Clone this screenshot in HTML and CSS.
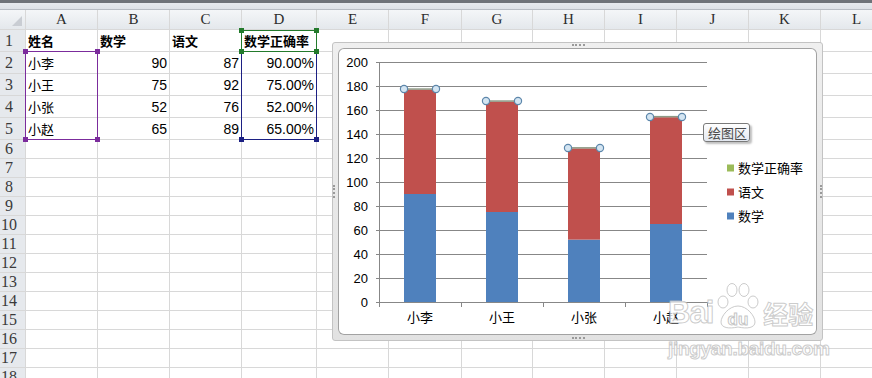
FILE: index.html
```html
<!DOCTYPE html>
<html lang="zh-CN">
<head>
  <meta charset="UTF-8" />
  <title>数学成绩 - 图表</title>
  <link rel="stylesheet" href="styles.css">
</head>
<body>
  <div class="titlebar"></div>

  <div class="sheet">
    <div class="ch corner"></div><div class="ch">A</div><div class="ch">B</div><div class="ch">C</div><div class="ch">D</div><div class="ch">E</div><div class="ch">F</div><div class="ch">G</div><div class="ch">H</div><div class="ch">I</div><div class="ch">J</div><div class="ch">K</div><div class="ch">L</div>

    <div class="rh">1</div><div class="hd">姓名</div><div class="hd">数学</div><div class="hd">语文</div><div class="hd">数学正确率</div><div></div><div></div><div></div><div></div><div></div><div></div><div></div><div></div>
    <div class="rh">2</div><div class="txt">小李</div><div class="num">90</div><div class="num">87</div><div class="num">90.00%</div><div></div><div></div><div></div><div></div><div></div><div></div><div></div><div></div>
    <div class="rh">3</div><div class="txt">小王</div><div class="num">75</div><div class="num">92</div><div class="num">75.00%</div><div></div><div></div><div></div><div></div><div></div><div></div><div></div><div></div>
    <div class="rh">4</div><div class="txt">小张</div><div class="num">52</div><div class="num">76</div><div class="num">52.00%</div><div></div><div></div><div></div><div></div><div></div><div></div><div></div><div></div>
    <div class="rh">5</div><div class="txt">小赵</div><div class="num">65</div><div class="num">89</div><div class="num">65.00%</div><div></div><div></div><div></div><div></div><div></div><div></div><div></div><div></div>

    <div class="rh">6</div><div></div><div></div><div></div><div></div><div></div><div></div><div></div><div></div><div></div><div></div><div></div><div></div>
    <div class="rh">7</div><div></div><div></div><div></div><div></div><div></div><div></div><div></div><div></div><div></div><div></div><div></div><div></div>
    <div class="rh">8</div><div></div><div></div><div></div><div></div><div></div><div></div><div></div><div></div><div></div><div></div><div></div><div></div>
    <div class="rh">9</div><div></div><div></div><div></div><div></div><div></div><div></div><div></div><div></div><div></div><div></div><div></div><div></div>
    <div class="rh">10</div><div></div><div></div><div></div><div></div><div></div><div></div><div></div><div></div><div></div><div></div><div></div><div></div>
    <div class="rh">11</div><div></div><div></div><div></div><div></div><div></div><div></div><div></div><div></div><div></div><div></div><div></div><div></div>
    <div class="rh">12</div><div></div><div></div><div></div><div></div><div></div><div></div><div></div><div></div><div></div><div></div><div></div><div></div>
    <div class="rh">13</div><div></div><div></div><div></div><div></div><div></div><div></div><div></div><div></div><div></div><div></div><div></div><div></div>
    <div class="rh">14</div><div></div><div></div><div></div><div></div><div></div><div></div><div></div><div></div><div></div><div></div><div></div><div></div>
    <div class="rh">15</div><div></div><div></div><div></div><div></div><div></div><div></div><div></div><div></div><div></div><div></div><div></div><div></div>
    <div class="rh">16</div><div></div><div></div><div></div><div></div><div></div><div></div><div></div><div></div><div></div><div></div><div></div><div></div>
    <div class="rh">17</div><div></div><div></div><div></div><div></div><div></div><div></div><div></div><div></div><div></div><div></div><div></div><div></div>
    <div class="rh">18</div><div></div><div></div><div></div><div></div><div></div><div></div><div></div><div></div><div></div><div></div><div></div><div></div>
  </div>

  <!-- range highlights of the chart source data -->
  <div class="sel sel-names"><i class="tl"></i><i class="tr"></i><i class="bl"></i><i class="br"></i></div>
  <div class="sel sel-math"><i class="tl"></i><i class="tr"></i><i class="bl"></i><i class="br"></i></div>
  <div class="sel sel-rate"><i class="tl"></i><i class="tr"></i><i class="bl"></i><i class="br"></i></div>

  <div class="chart">
    <span class="grip grip-top"></span>
    <span class="grip grip-bottom"></span>
    <span class="grip grip-left"></span>
    <span class="grip grip-right"></span>

    <div class="plot-area">
      <svg class="chart-svg" width="479" height="287" viewBox="0 0 479 287">
        <g class="gridlines">
          <line x1="38" y1="14.5" x2="369" y2="14.5"/>
          <line x1="38" y1="38.5" x2="369" y2="38.5"/>
          <line x1="38" y1="62.5" x2="369" y2="62.5"/>
          <line x1="38" y1="86.5" x2="369" y2="86.5"/>
          <line x1="38" y1="110.5" x2="369" y2="110.5"/>
          <line x1="38" y1="134.5" x2="369" y2="134.5"/>
          <line x1="38" y1="158.5" x2="369" y2="158.5"/>
          <line x1="38" y1="182.5" x2="369" y2="182.5"/>
          <line x1="38" y1="206.5" x2="369" y2="206.5"/>
          <line x1="38" y1="230.5" x2="369" y2="230.5"/>
        </g>

        <g class="y-labels">
          <text x="30" y="19">200</text>
          <text x="30" y="43">180</text>
          <text x="30" y="67">160</text>
          <text x="30" y="91">140</text>
          <text x="30" y="115">120</text>
          <text x="30" y="139">100</text>
          <text x="30" y="163">80</text>
          <text x="30" y="187">60</text>
          <text x="30" y="211">40</text>
          <text x="30" y="235">20</text>
          <text x="30" y="259">0</text>
        </g>

        <!-- 数学 -->
        <g fill="#4f81bd">
          <rect x="66" y="146" width="32" height="108"/>
          <rect x="148" y="164" width="32" height="90"/>
          <rect x="230" y="191.6" width="32" height="62.4"/>
          <rect x="312" y="176" width="32" height="78"/>
        </g>
        <!-- 语文 -->
        <g fill="#c0504d">
          <rect x="66" y="41.6" width="32" height="104.4"/>
          <rect x="148" y="53.6" width="32" height="110.4"/>
          <rect x="230" y="100.4" width="32" height="91.2"/>
          <rect x="312" y="69.2" width="32" height="106.8"/>
        </g>
        <!-- 数学正确率 (selected) -->
        <g fill="#8d9a86">
          <rect x="66" y="40.3" width="32" height="1.5"/>
          <rect x="148" y="52.3" width="32" height="1.5"/>
          <rect x="230" y="99.1" width="32" height="1.5"/>
          <rect x="312" y="67.9" width="32" height="1.5"/>
        </g>

        <g class="axis">
          <line x1="38" y1="254.5" x2="369" y2="254.5"/>
          <line x1="41.5" y1="14" x2="41.5" y2="259"/>
          <line x1="123.5" y1="254" x2="123.5" y2="259"/>
          <line x1="205.5" y1="254" x2="205.5" y2="259"/>
          <line x1="287.5" y1="254" x2="287.5" y2="259"/>
          <line x1="369.5" y1="254" x2="369.5" y2="259"/>
        </g>

        <g class="handles">
          <circle cx="66" cy="41" r="3.6"/><circle cx="98" cy="41" r="3.6"/>
          <circle cx="148" cy="53" r="3.6"/><circle cx="180" cy="53" r="3.6"/>
          <circle cx="230" cy="100" r="3.6"/><circle cx="262" cy="100" r="3.6"/>
          <circle cx="312" cy="69" r="3.6"/><circle cx="344" cy="69" r="3.6"/>
        </g>

        <g class="x-labels">
          <text x="82" y="274">小李</text>
          <text x="164" y="274">小王</text>
          <text x="246" y="274">小张</text>
          <text x="328" y="274">小赵</text>
        </g>

        <g class="legend">
          <rect x="389" y="116.5" width="7" height="7" fill="#9bbb59"/>
          <text x="400" y="125">数学正确率</text>
          <rect x="389" y="140.5" width="7" height="7" fill="#c0504d"/>
          <text x="400" y="149">语文</text>
          <rect x="389" y="164.5" width="7" height="7" fill="#4f81bd"/>
          <text x="400" y="173">数学</text>
        </g>
      </svg>

      <div class="tooltip">绘图区</div>
    </div>
  </div>

  <div class="watermark">
    <div class="wm-logo">
      <span class="wm-bai">Bai</span>
      <svg class="wm-paw" width="46" height="48" viewBox="0 0 46 48">
        <ellipse cx="8" cy="20" rx="5" ry="6"/>
        <ellipse cx="17" cy="8" rx="5" ry="6.5"/>
        <ellipse cx="29" cy="8" rx="5" ry="6.5"/>
        <ellipse cx="38" cy="20" rx="5" ry="6"/>
        <path d="M23 24 C14 24 6 34 6 40 C6 46 14 47 23 45 C32 47 40 46 40 40 C40 34 32 24 23 24 Z"/>
        <text x="23" y="43">du</text>
      </svg>
      <span class="wm-jy">经验</span>
    </div>
    <div class="wm-url">jingyan.baidu.com</div>
  </div>
</body>
</html>
```

FILE: styles.css
```css
body {
  margin: 0;
  width: 872px;
  height: 378px;
  overflow: hidden;
  position: relative;
  background: #fff;
  font-family: "Liberation Sans", "Noto Sans CJK SC", sans-serif;
}

.titlebar {
  height: 10px;
  box-sizing: border-box;
  background: linear-gradient(#6e7278 0, #6e7278 3px, #e6e9ed 3px, #dde1e6 9px);
  border-bottom: 1px solid #b7bcc3;
}

/* worksheet grid */
.sheet {
  display: grid;
  grid-template-columns: 25px 71px 71px 71px 74px 71px 72px 70px 71px 71px 71px 71px 71px;
  grid-template-rows: 19px repeat(5, 21px) repeat(13, 18px);
  gap: 1px;
  width: 892px;
  background: #d8d8d8;
}
.sheet > div {
  display: flex;
  align-items: center;
  padding: 0 2px;
  background: #fff;
  font-size: 14px;
  color: #000;
  white-space: nowrap;
  overflow: hidden;
}
.sheet > .ch {
  justify-content: center;
  background: linear-gradient(#f4f6f8, #e4e8ec);
  font-family: "Liberation Serif", serif;
  font-size: 15px;
  color: #2d2d2d;
}
.sheet > .corner {
  position: relative;
}
.corner::after {
  content: "";
  position: absolute;
  right: 3px;
  bottom: 3px;
  border-left: 10px solid transparent;
  border-bottom: 10px solid #c9cdd3;
}
.sheet > .rh {
  justify-content: center;
  padding: 0 7px 0 0;
  background: #e6e9ed;
  font-family: "Liberation Serif", serif;
  font-size: 16px;
  color: #3a3a3a;
}
.sheet > .hd {
  font-family: "Noto Sans CJK SC", sans-serif;
  font-size: 13px;
  font-weight: bold;
}
.sheet > .txt {
  font-family: "Noto Sans CJK SC", sans-serif;
  font-size: 13px;
}
.sheet > .num {
  justify-content: flex-end;
}

/* source range highlights */
.sel {
  position: absolute;
  box-sizing: border-box;
  border: 1px solid currentColor;
}
.sel i {
  position: absolute;
  width: 5px;
  height: 5px;
  background: currentColor;
}
.sel .tl { left: -3px; top: -3px; }
.sel .tr { right: -3px; top: -3px; }
.sel .bl { left: -3px; bottom: -3px; }
.sel .br { right: -3px; bottom: -3px; }
.sel-names { left: 25px; top: 51px; width: 73px; height: 89px; color: #7b2c9c; }
.sel-math { left: 241px; top: 51px; width: 76px; height: 89px; color: #1c2083; }
.sel-rate { left: 241px; top: 30px; width: 76px; height: 22px; color: #237a2c; }

/* embedded chart */
.chart {
  position: absolute;
  left: 332px;
  top: 42px;
  width: 491px;
  height: 299px;
  box-sizing: border-box;
  padding: 5px;
  border: 1px solid #c3c3c3;
  border-radius: 3px;
  background: linear-gradient(#efefef, #e2e2e2);
}
.plot-area {
  position: relative;
  width: 479px;
  height: 287px;
  background: #fff;
  border-radius: 6px;
  box-shadow: inset 0 0 0 1px #a2a2a2;
}
.chart-svg {
  display: block;
}
.gridlines line,
.axis line {
  stroke: #878787;
  stroke-width: 1;
}
.y-labels text {
  font-family: "Liberation Sans", sans-serif;
  font-size: 13px;
  text-anchor: end;
  fill: #000;
}
.x-labels text {
  font-family: "Noto Sans CJK SC", sans-serif;
  font-size: 13px;
  text-anchor: middle;
  fill: #000;
}
.legend text {
  font-family: "Noto Sans CJK SC", sans-serif;
  font-size: 13px;
  fill: #000;
}
.handles circle {
  fill: #d4e5f2;
  stroke: #5d87ab;
  stroke-width: 1.2;
}

.grip {
  position: absolute;
}
.grip-top,
.grip-bottom {
  left: 239px;
  width: 13px;
  border-top: 2px dotted #9a9a9a;
}
.grip-top { top: 1px; }
.grip-bottom { bottom: 1px; }
.grip-left,
.grip-right {
  top: 142px;
  height: 13px;
  border-left: 2px dotted #9a9a9a;
}
.grip-left { left: 0; }
.grip-right { right: 0; }

.tooltip {
  position: absolute;
  left: 365px;
  top: 75px;
  width: 47px;
  height: 19px;
  box-sizing: border-box;
  padding-left: 4px;
  border: 1px solid #7a7a7a;
  border-radius: 3px;
  background: linear-gradient(#ffffff, #e2e7ef);
  box-shadow: 2px 2px 2px rgba(0, 0, 0, 0.25);
  font-family: "Noto Sans CJK SC", sans-serif;
  font-size: 13px;
  line-height: 17px;
  color: #4a4a4a;
}

/* site watermark */
.watermark {
  position: absolute;
  left: 668px;
  top: 282px;
  color: rgba(255, 255, 255, 0.75);
  -webkit-text-stroke: 1px rgba(190, 190, 190, 0.8);
  font-family: "Liberation Sans", "Noto Sans CJK SC", sans-serif;
  font-weight: bold;
}
.wm-logo {
  display: flex;
  align-items: flex-end;
  gap: 2px;
  height: 48px;
}
.wm-bai {
  font-size: 31px;
  line-height: 34px;
  letter-spacing: -1px;
}
.wm-paw {
  display: block;
}
.wm-paw ellipse,
.wm-paw path {
  fill: rgba(255, 255, 255, 0.6);
  stroke: rgba(190, 190, 190, 0.8);
  stroke-width: 1;
}
.wm-paw text {
  font-family: "Liberation Sans", sans-serif;
  font-size: 17px;
  font-weight: bold;
  text-anchor: middle;
  fill: rgba(255, 255, 255, 0.8);
  stroke: rgba(190, 190, 190, 0.9);
  stroke-width: 1;
}
.wm-jy {
  font-family: "Noto Sans CJK SC", sans-serif;
  font-size: 25px;
  line-height: 34px;
}
.wm-url {
  margin-top: 8px;
  font-size: 19px;
  letter-spacing: -0.3px;
}
```
